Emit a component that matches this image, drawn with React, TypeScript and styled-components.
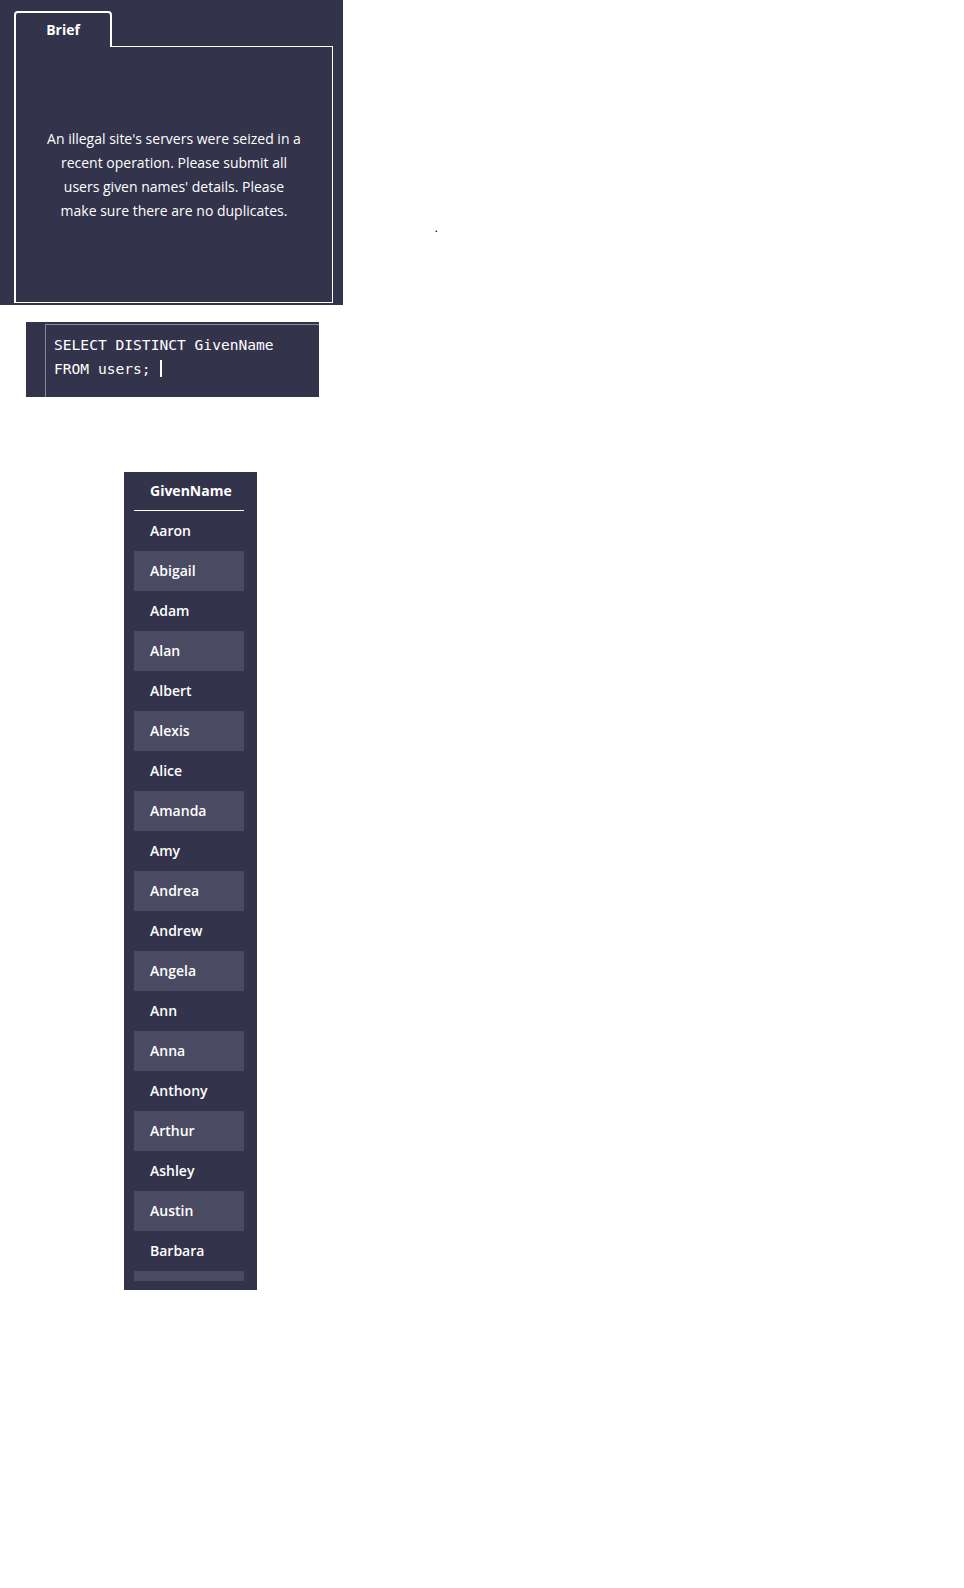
import React from "react";
import styled, { createGlobalStyle } from "styled-components";

const Global = createGlobalStyle`
  html, body { margin: 0; padding: 0; background: #ffffff; }
  body { font-family: "Open Sans", "Noto Sans", sans-serif; }
`;

const navy = "#33334b";
const rowHi = "#4a4b62";

const Page = styled.div`
  display: flex;
  flex-direction: column;
  align-items: flex-start;
  width: 964px;
  min-height: 1588px;
`;

const TopRow = styled.div`
  display: flex;
  align-items: flex-start;
`;

const BriefPanel = styled.section`
  width: 343px;
  height: 305px;
  box-sizing: border-box;
  background: ${navy};
  padding: 11px 10px 2px 14px;
  display: flex;
  flex-direction: column;
`;

const Tab = styled.div`
  width: 98px;
  height: 36px;
  box-sizing: border-box;
  border: 2px solid #ffffff;
  border-bottom: none;
  border-radius: 4px 4px 0 0;
  color: #ffffff;
  font-weight: 700;
  font-size: 14px;
  display: flex;
  justify-content: center;
  padding-top: 7px;
  margin-bottom: -1px;
  position: relative;
  z-index: 1;
  background: ${navy};
`;

const TabBody = styled.div`
  flex: 1;
  box-sizing: border-box;
  border: 1.5px solid #ffffff;
  border-left-width: 2px;
  display: flex;
  align-items: center;
  justify-content: center;
`;

const BriefText = styled.p`
  margin: 0;
  width: 257px;
  color: #ffffff;
  font-size: 14px;
  font-weight: 500;
  line-height: 24px;
  text-align: center;
`;

const Dot = styled.span`
  margin: 223px 0 0 92px;
  font-family: "Liberation Sans", sans-serif;
  font-size: 9px;
  font-weight: 700;
  line-height: 12px;
  color: #000;
`;

const SqlBox = styled.div`
  margin: 17px 0 0 26px;
  width: 293px;
  height: 75px;
  box-sizing: border-box;
  background: ${navy};
  padding: 2px 0 0 19px;
  display: flex;
`;

const Editor = styled.div`
  flex: 1;
  border-top: 1px solid #8a8a96;
  border-left: 1px solid #8a8a96;
  padding: 8px 0 0 8px;
  font-family: "DejaVu Sans Mono", "Liberation Mono", monospace;
  font-size: 14.6px;
  line-height: 24px;
  color: #ffffff;
  white-space: pre;
`;

const Caret = styled.span`
  display: inline-block;
  width: 1.5px;
  height: 17px;
  background: #ffffff;
  vertical-align: -3px;
  margin-left: 1px;
`;

const TableCard = styled.div`
  margin: 75px 0 0 124px;
  width: 133px;
  height: 818px;
  box-sizing: border-box;
  background: ${navy};
  padding: 10px 13px 9px 10px;
`;

const Scroll = styled.div`
  height: 100%;
  overflow: hidden;
`;

const Table = styled.table`
  width: 110px;
  border-collapse: collapse;
  color: #ffffff;
  font-size: 14px;
`;

const Th = styled.th`
  height: 28px;
  box-sizing: border-box;
  padding: 1px 0 0 16px;
  text-align: left;
  font-weight: 700;
  border-bottom: 1.5px solid #ffffff;
  vertical-align: top;
  line-height: 16px;
`;

const Td = styled.td<{ $hi: boolean }>`
  height: 40px;
  padding: 0 0 0 16px;
  background: ${(p) => (p.$hi ? rowHi : "transparent")};
  font-weight: 600;
  vertical-align: middle;
`;

const names = [
  "Aaron", "Abigail", "Adam", "Alan", "Albert", "Alexis", "Alice", "Amanda",
  "Amy", "Andrea", "Andrew", "Angela", "Ann", "Anna", "Anthony", "Arthur",
  "Ashley", "Austin", "Barbara", "Barry",
];

export default function App() {
  return (
    <Page>
      <Global />
      <TopRow>
        <BriefPanel>
          <Tab>Brief</Tab>
          <TabBody>
            <BriefText>
              An illegal site's servers were seized in a recent operation. Please
              submit all users given names' details. Please make sure there are
              no duplicates.
            </BriefText>
          </TabBody>
        </BriefPanel>
        <Dot>.</Dot>
      </TopRow>
      <SqlBox>
        <Editor>
          {"SELECT DISTINCT GivenName\nFROM users; "}
          <Caret />
        </Editor>
      </SqlBox>
      <TableCard>
        <Scroll>
          <Table>
            <thead>
              <tr>
                <Th>GivenName</Th>
              </tr>
            </thead>
            <tbody>
              {names.map((n, i) => (
                <tr key={n}>
                  <Td $hi={i % 2 === 1}>{n}</Td>
                </tr>
              ))}
            </tbody>
          </Table>
        </Scroll>
      </TableCard>
    </Page>
  );
}
